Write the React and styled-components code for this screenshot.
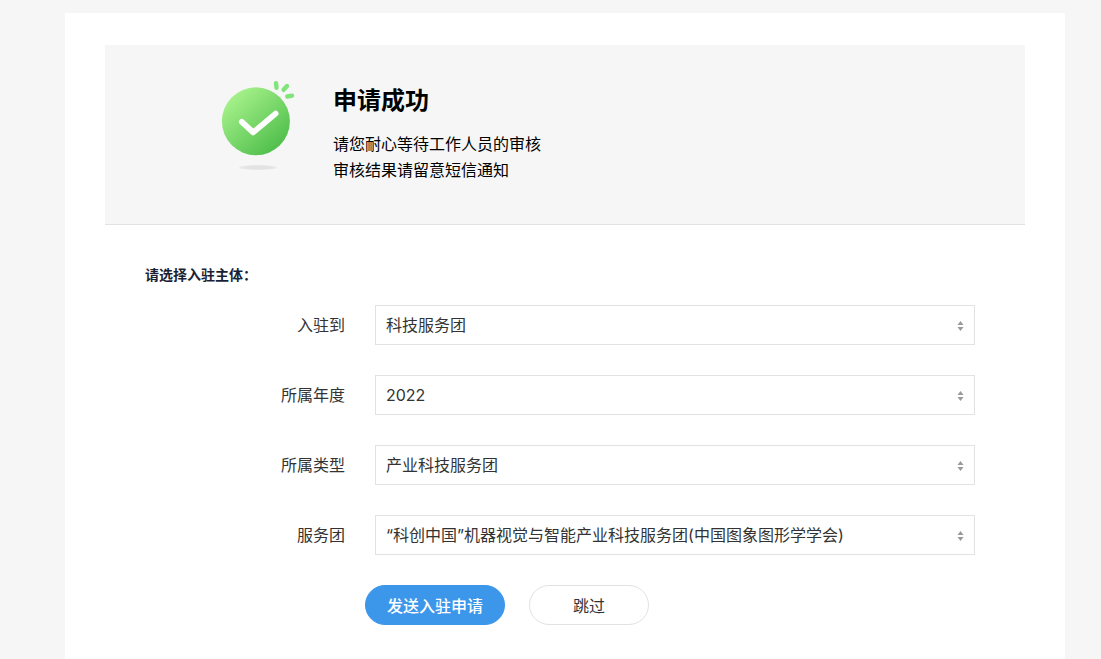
import React from "react";
import styled, { createGlobalStyle, css } from "styled-components";

const GlobalStyle = createGlobalStyle`
    * {
        box-sizing: border-box;
    }
    body {
        margin: 0;
        background-color: #f6f6f6;
        color: #333;
        font-family: Inter, "Noto Sans CJK SC", sans-serif;
        font-size: 16px;
    }
    button, select {
        font: inherit;
    }
`

const Page = styled.div`
    min-height: 100vh;
    display: flex;
    padding: 13px 36px 0 65px;
`

const Card = styled.main`
    flex: 1;
    padding: 32px 40px 33px;
    background-color: #fff;
`

const Banner = styled.header`
    display: flex;
    align-items: flex-start;
    gap: 32px;
    padding: 32px 40px 41px 112px;
    background-color: #f6f6f6;
    border-bottom: 1px solid #e2e2e2;

    svg {
        flex: none;
    }
    h1 {
        margin: 6px 0 12px;
        color: #000;
        font-size: 24px;
        line-height: 36px;
    }
    p {
        margin: 0;
        color: #000;
        line-height: 26px;
    }
`

const Form = styled.form`
    padding: 40px 50px 0 40px;
`

const FormTitle = styled.h2`
    margin: 0 0 20px;
    color: #1c1f33;
    font-size: 14px;
    line-height: 20px;
`

const Field = styled.div`
    display: grid;
    grid-template-columns: 200px 1fr;
    column-gap: 30px;
    margin-bottom: 30px;

    label {
        line-height: 40px;
        text-align: right;
    }
`

const SelectBox = styled.div`
    position: relative;

    select {
        display: block;
        width: 100%;
        height: 40px;
        padding: 0 32px 0 10px;
        appearance: none;
        background-color: #fff;
        border: 1px solid #e2e2e2;
        border-radius: 0;
        color: #333;
    }
    svg {
        position: absolute;
        top: 16px;
        right: 11px;
        pointer-events: none;
    }
`

const Actions = styled.div`
    display: flex;
    gap: 24px;
    padding-left: 220px;
`

const Button = styled.button`
    width: 120px;
    height: 40px;
    padding: 0;
    background-color: #fff;
    border: 1px solid #e2e2e2;
    border-radius: 20px;
    color: #333;
    cursor: pointer;

    ${({ $primary }) => $primary && css`
        width: 140px;
        background-color: #3c96ea;
        border-color: #3c96ea;
        color: #fff;
        font-weight: 500;
    `}
`

const fields = [
    { id: "target", label: "入驻到", value: "科技服务团" },
    { id: "year", label: "所属年度", value: "2022" },
    { id: "type", label: "所属类型", value: "产业科技服务团" },
    { id: "group", label: "服务团", value: "“科创中国”机器视觉与智能产业科技服务团(中国图象图形学学会)" },
]

const SuccessIcon = () => (
    <svg width="84" height="100" viewBox="0 0 84 100" fill="none" aria-hidden="true">
        <defs>
            <linearGradient id="disc" x1="14" y1="16" x2="62" y2="70" gradientUnits="userSpaceOnUse">
                <stop stopColor="#a9f38d" />
                <stop offset="1" stopColor="#50bf4c" />
            </linearGradient>
            <radialGradient id="shade">
                <stop offset="0.6" stopColor="#e3e3e3" />
                <stop offset="1" stopColor="#ebebeb" />
            </radialGradient>
        </defs>
        <ellipse cx="41" cy="90.5" rx="19" ry="2.6" fill="url(#shade)" />
        <circle cx="38.9" cy="44.3" r="34" fill="url(#disc)" />
        <path d="M24.8 44.8l11.4 10.6L58.6 36.6" stroke="#fff" strokeWidth="5.8" strokeLinecap="round" strokeLinejoin="round" />
        <path d="M59 6.2l.5 4.6M70 9L66.6 12.8M75 18.7l-4.7.8" stroke="#7fe47a" strokeWidth="4.4" strokeLinecap="round" />
    </svg>
)

const SortArrows = () => (
    <svg width="7" height="10" viewBox="0 0 7 10" fill="#999" aria-hidden="true">
        <path d="M3.5 0L6.5 4H.5zM3.5 10L.5 6h6z" />
    </svg>
)

const SelectField = ({ id, label, value }) => (
    <Field>
        <label htmlFor={id}>{label}</label>
        <SelectBox>
            <select id={id} name={id} defaultValue={value}>
                <option value={value}>{value}</option>
            </select>
            <SortArrows />
        </SelectBox>
    </Field>
)

class App extends React.Component {
    render() {
        return (
            <>
                <GlobalStyle />
                <Page>
                    <Card>
                        <Banner>
                            <SuccessIcon />
                            <div>
                                <h1>申请成功</h1>
                                <p>请您耐心等待工作人员的审核</p>
                                <p>审核结果请留意短信通知</p>
                            </div>
                        </Banner>
                        <Form>
                            <FormTitle>请选择入驻主体：</FormTitle>
                            {fields.map(field => <SelectField key={field.id} {...field} />)}
                            <Actions>
                                <Button type="button" $primary>发送入驻申请</Button>
                                <Button type="button">跳过</Button>
                            </Actions>
                        </Form>
                    </Card>
                </Page>
            </>
        );
    }
}

export default App
